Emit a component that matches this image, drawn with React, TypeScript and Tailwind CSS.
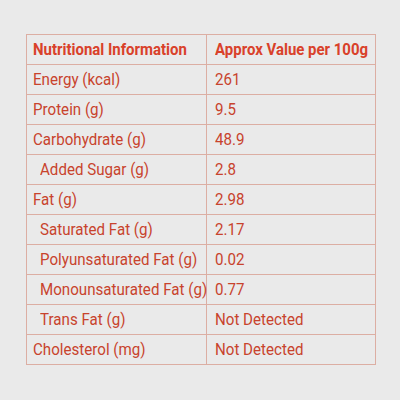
const rows: [string, string, boolean][] = [
  ["Energy (kcal)", "261", false],
  ["Protein (g)", "9.5", false],
  ["Carbohydrate (g)", "48.9", false],
  ["Added Sugar (g)", "2.8", true],
  ["Fat (g)", "2.98", false],
  ["Saturated Fat (g)", "2.17", true],
  ["Polyunsaturated Fat (g)", "0.02", true],
  ["Monounsaturated Fat (g)", "0.77", true],
  ["Trans Fat (g)", "Not Detected", true],
  ["Cholesterol (mg)", "Not Detected", false],
];

function Txt({ children, bold }: { children: string; bold?: boolean }) {
  return (
    <span
      className={`inline-block origin-left whitespace-nowrap ${
        bold ? "scale-x-[0.88] font-bold text-[#d9412a]" : "scale-x-[0.89]"
      }`}
    >
      {children}
    </span>
  );
}

export default function App() {
  return (
    <div className="w-[400px] h-[400px] bg-[#eaeaea] pt-[34px] pl-[26px] font-['Roboto',sans-serif]">
      <table className="table-fixed w-[349px] border-collapse text-[17px] leading-none text-[#c8432d]">
        <colgroup>
          <col className="w-[180px]" />
          <col className="w-[169px]" />
        </colgroup>
        <thead>
          <tr className="h-[30px]">
            <th className="border border-[#dcaea3] pl-[6px] text-left">
              <Txt bold>Nutritional Information</Txt>
            </th>
            <th className="border border-[#dcaea3] pl-[8px] text-left">
              <Txt bold>Approx Value per 100g</Txt>
            </th>
          </tr>
        </thead>
        <tbody>
          {rows.map(([label, value, indent]) => (
            <tr key={label} className="h-[30px]">
              <td className={`border border-[#dcaea3] ${indent ? "pl-[13px]" : "pl-[6px]"}`}>
                <Txt>{label}</Txt>
              </td>
              <td className="border border-[#dcaea3] pl-[8px]">
                <Txt>{value}</Txt>
              </td>
            </tr>
          ))}
        </tbody>
      </table>
    </div>
  );
}
